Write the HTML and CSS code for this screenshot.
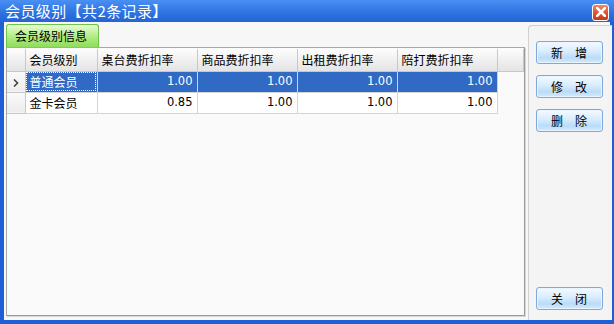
FILE: index.html
```html
<!DOCTYPE html>
<html lang="zh">
<head>
<meta charset="utf-8">
<link rel="stylesheet" href="styles.css">
</head>
<body>
<div class="window">
  <div class="titlebar">
    <span class="title">会员级别【共2条记录】</span>
    <span class="close"><svg width="10" height="10" viewBox="0 0 10 10"><path d="M1 1 L9 9 M9 1 L1 9" stroke="#fff" stroke-width="2.6" stroke-linecap="square"/></svg></span>
  </div>
  <div class="client">
    <div class="left">
      <div class="tabs"><div class="tab">会员级别信息</div></div>
      <div class="grid">
        <table>
          <colgroup><col class="c0"><col class="c1"><col class="c2"><col class="c2"><col class="c2"><col class="c2"><col class="c6"></colgroup>
          <thead>
            <tr><th></th><th>会员级别</th><th>桌台费折扣率</th><th>商品费折扣率</th><th>出租费折扣率</th><th>陪打费折扣率</th><th></th></tr>
          </thead>
          <tbody>
            <tr class="sel"><td class="rh"><svg width="6" height="8" viewBox="0 0 6 8"><path d="M1 0.5 L4.5 4 L1 7.5" fill="none" stroke="#444" stroke-width="1.6"/></svg></td><td class="name focus">普通会员</td><td class="num">1.00</td><td class="num">1.00</td><td class="num">1.00</td><td class="num">1.00</td><td class="empty"></td></tr>
            <tr><td class="rh"></td><td class="name">金卡会员</td><td class="num">0.85</td><td class="num">1.00</td><td class="num">1.00</td><td class="num">1.00</td><td class="empty"></td></tr>
          </tbody>
        </table>
      </div>
    </div>
    <div class="right">
      <div class="btns">
        <button class="btn">新　增</button>
        <button class="btn">修　改</button>
        <button class="btn">删　除</button>
      </div>
      <button class="btn">关　闭</button>
    </div>
  </div>
</div>
</body>
</html>
```

FILE: styles.css
```css
* { box-sizing: border-box; }
html, body { margin: 0; padding: 0; }
body {
  width: 614px; height: 324px; overflow: hidden;
  font-family: "Noto Sans CJK SC", "DejaVu Sans", sans-serif;
  font-size: 12px; color: #000;
}
.window {
  width: 614px; height: 324px;
  display: flex; flex-direction: column;
  background: #1f5fd6;
}
.titlebar {
  height: 22px; flex: none;
  display: flex; align-items: center; justify-content: space-between;
  padding: 0 5px 0 5px;
  background: linear-gradient(#4a8ff2 0%, #3b80ea 30%, #2a6dde 70%, #2564d6 100%);
}
.title {
  color: #fff; font-size: 15px; line-height: 22px; letter-spacing: 0.4px;
}
.close {
  width: 17px; height: 17px; margin-top: 2px;
  display: flex; align-items: center; justify-content: center;
  border: 1px solid #fff; border-radius: 3px;
  background: linear-gradient(#ee8a6e, #e0502c 55%, #c93a1b);
}
.client {
  flex: 1; display: flex;
  margin: 0 4px 4px 4px;
  background: #f7f7f7;
}
.left { flex: 1; display: flex; flex-direction: column; padding: 2px 3px 4px 2px; }
.tabs { height: 23px; display: flex; flex: none; }
.tab {
  width: 93px; height: 23px;
  border: 1px solid #6fc24a; border-bottom: none; border-radius: 3px 3px 0 0;
  background: linear-gradient(#e9fbd9, #b3ec86 50%, #8fdc5a);
  font-size: 12px; line-height: 21px; padding-left: 8px; color: #000;
}
.grid {
  flex: 1;
  border: 1px solid #a8a8a8; border-right-color: #9a9a9a; border-bottom-color: #9a9a9a;
  background: #fafafa;
  box-shadow: 1px 1px 0 #d8d8d8;
  padding: 1px 0 0 0;
}
table { border-collapse: collapse; table-layout: fixed; width: 516px; }
col.c0 { width: 18px; }
col.c1 { width: 72px; }
col.c2 { width: 100px; }
col.c6 { width: 26px; }
th {
  height: 22px; padding: 0 0 0 4px; text-align: left; font-weight: normal;
  background: linear-gradient(#fdfdfd, #f0f0f0 50%, #e4e4e4);
  border: 1px solid #c8c8c8; border-top: none;
  line-height: 20px;
}
th:first-child { border-left: none; }
td {
  height: 21px; padding: 0 4px; border: 1px solid #d4d4d4;
  background: #fff; line-height: 19px; white-space: nowrap;
}
td.rh {
  background: linear-gradient(#fafafa, #ececec);
  border-color: #c8c8c8; border-left: none; padding: 0 0 0 6px;
}
td.name { padding-left: 4px; }
td.num { text-align: right; font-family: "DejaVu Sans", sans-serif; font-size: 11.5px; padding-right: 4px; }
td.empty { background: transparent; border: none; }
tr.sel td.name, tr.sel td.num { background: #316ac5; color: #fff; }
td.focus { outline: 1px dotted #fff; outline-offset: -2px; }
.right {
  width: 84px; flex: none; margin-top: 3px;
  display: flex; flex-direction: column; justify-content: space-between;
  border-left: 1px solid #d0d0d0; border-top: 1px solid #d0d0d0; border-top-left-radius: 4px;
  background: #f4f4f4;
  padding: 15px 0 10px 7px;
}
.btns { display: flex; flex-direction: column; gap: 11px; }
.btn {
  width: 67px; height: 23px; padding: 0; margin: 0;
  font-family: "Noto Sans CJK SC", sans-serif; font-size: 12px; color: #000;
  border: 1px solid #7fa9d9; border-radius: 3px;
  background: linear-gradient(#f4faff, #d9ecfc 45%, #b9dcf8 75%, #d3eafc);
  box-shadow: inset 0 0 0 1px #e8f4ff;
}
```
